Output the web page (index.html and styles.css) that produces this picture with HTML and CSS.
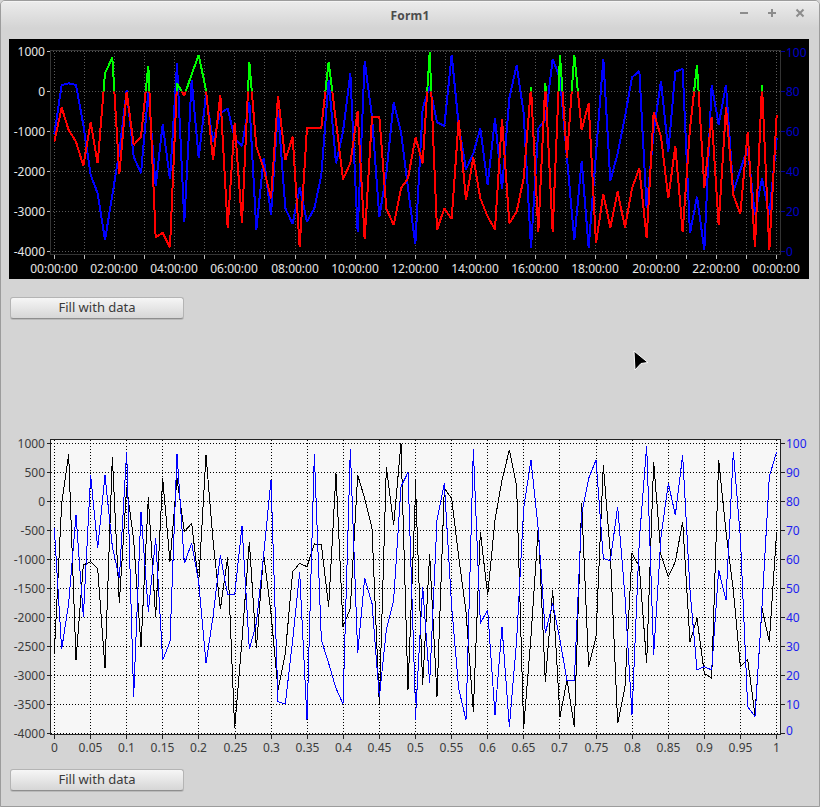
FILE: index.html
```html
<!DOCTYPE html>
<html lang="en">
<head>
<meta charset="utf-8">
<title>Form1</title>
<link rel="stylesheet" href="styles.css">
</head>
<body>
<div class="window">
  <header class="titlebar">
    <span class="title">Form1</span>
    <div class="controls">
      <svg class="ctl" viewBox="0 0 10 10"><path d="M1 5H9"/></svg>
      <svg class="ctl" viewBox="0 0 10 10"><path d="M1 5H9M5 1V9"/></svg>
      <svg class="ctl" viewBox="0 0 10 10"><path d="M1.5 1.5L8.5 8.5M8.5 1.5L1.5 8.5"/></svg>
    </div>
  </header>
  <main class="content">
    <svg class="chart chart-top" viewBox="9 39 800 240">
      <defs>
        <clipPath id="above"><rect x="9" y="39" width="800" height="52.5"/></clipPath>
        <clipPath id="below"><rect x="9" y="91.5" width="800" height="188"/></clipPath>
      </defs>
      <path class="grid" d="M50 51.500H781M50 91.500H781M50 131.500H781M50 171.500H781M50 211.500H781M50 251.500H781"/>
      <path class="grid" d="M54.500 50V254M84.500 50V254M114.500 50V254M144.500 50V254M174.500 50V254M204.500 50V254M234.500 50V254M264.500 50V254M295.500 50V254M325.500 50V254M355.500 50V254M385.500 50V254M415.500 50V254M445.500 50V254M475.500 50V254M505.500 50V254M535.500 50V254M565.500 50V254M595.500 50V254M626.500 50V254M656.500 50V254M686.500 50V254M716.500 50V254M746.500 50V254M776.500 50V254"/>
      <path class="frame" d="M50.500 50.500H780.500V254.500H50.500Z"/>
      <path class="tick-l" d="M47 51.500H50M47 91.500H50M47 131.500H50M47 171.500H50M47 211.500H50M47 251.500H50"/>
      <path class="tick-l" d="M54.500 255V259M84.500 255V259M114.500 255V259M144.500 255V259M174.500 255V259M204.500 255V259M234.500 255V259M264.500 255V259M295.500 255V259M325.500 255V259M355.500 255V259M385.500 255V259M415.500 255V259M445.500 255V259M475.500 255V259M505.500 255V259M535.500 255V259M565.500 255V259M595.500 255V259M626.500 255V259M656.500 255V259M686.500 255V259M716.500 255V259M746.500 255V259M776.500 255V259"/>
      <path class="tick-r" d="M781 51.500H785M781 91.500H785M781 131.500H785M781 171.500H785M781 211.500H785M781 251.500H785"/>
      <g transform="translate(50 45) scale(0.33333)">
        <polyline class="s2 blue" points="13,268 35,120 56,115 78,120 100,240 122,390 143,445 165,585 187,450 208,320 230,135 251,335 273,385 295,140 317,423 338,238 360,403 381,55 403,530 425,105 446,338 468,150 489,290 511,205 533,190 554,280 576,303 598,170 619,555 641,338 663,510 684,195 706,490 728,537 749,428 771,530 793,490 814,390 836,105 858,355 879,260 901,85 923,562 944,48 966,215 988,517 1009,385 1031,172 1053,262 1074,430 1096,598"/>
      </g>
      <g transform="translate(415 45) scale(0.33333)">
        <polyline class="s2 blue" points="1,598 23,190 44,125 66,232 88,243 110,30 131,240 153,373 175,325 196,250 218,420 240,220 261,432 283,160 305,60 326,205 348,610 370,250 391,225 413,42 435,100 456,340 478,585 500,348 521,610 543,325 565,42 586,408 608,325 630,215 651,97 673,78 695,490 716,260 738,108 760,320 781,80 803,72 825,565 846,455 868,615 890,120 911,238 933,120 955,440 976,375 998,310 1020,510 1041,400 1063,510 1085,280"/>
      </g>
      <g clip-path="url(#above)">
        <g transform="translate(50 45) scale(0.33333)">
          <polyline class="s2 green" points="13,290 35,188 56,255 78,290 100,363 122,232 143,355 165,85 187,38 208,388 230,140 251,300 273,275 295,62 317,577 338,563 360,607 381,115 403,152 425,88 446,30 468,135 489,345 511,150 533,548 554,235 576,533 598,50 619,305 641,370 663,460 684,152 706,345 728,275 749,607 771,248 793,248 814,248 836,50 858,230 879,403 901,355 923,198 944,583 966,215 988,215 1009,490 1031,540 1053,430 1074,400 1096,280"/>
        </g>
        <g transform="translate(415 45) scale(0.33333)">
          <polyline class="s2 green" points="1,275 23,355 44,22 66,555 88,490 110,522 131,225 153,465 175,338 196,460 218,515 240,553 261,222 283,535 305,500 326,400 348,125 370,560 391,113 413,562 435,30 456,338 478,30 500,255 521,175 543,595 565,447 586,547 608,440 630,548 651,430 673,370 695,580 716,202 738,275 760,460 781,303 803,562 825,250 846,60 868,428 890,215 911,540 933,187 955,450 976,507 998,262 1020,607 1041,120 1063,615 1085,210"/>
        </g>
      </g>
      <g clip-path="url(#below)">
        <g transform="translate(50 45) scale(0.33333)">
          <polyline class="s2 red" points="13,290 35,188 56,255 78,290 100,363 122,232 143,355 165,85 187,38 208,388 230,140 251,300 273,275 295,62 317,577 338,563 360,607 381,115 403,152 425,88 446,30 468,135 489,345 511,150 533,548 554,235 576,533 598,50 619,305 641,370 663,460 684,152 706,345 728,275 749,607 771,248 793,248 814,248 836,50 858,230 879,403 901,355 923,198 944,583 966,215 988,215 1009,490 1031,540 1053,430 1074,400 1096,280"/>
        </g>
        <g transform="translate(415 45) scale(0.33333)">
          <polyline class="s2 red" points="1,275 23,355 44,22 66,555 88,490 110,522 131,225 153,465 175,338 196,460 218,515 240,553 261,222 283,535 305,500 326,400 348,125 370,560 391,113 413,562 435,30 456,338 478,30 500,255 521,175 543,595 565,447 586,547 608,440 630,548 651,430 673,370 695,580 716,202 738,275 760,460 781,303 803,562 825,250 846,60 868,428 890,215 911,540 933,187 955,450 976,507 998,262 1020,607 1041,120 1063,615 1085,210"/>
        </g>
      </g>
      <g class="lbl lbl-end light">
        <text x="45" y="56">1000</text><text x="45" y="96">0</text><text x="45" y="136">-1000</text><text x="45" y="176">-2000</text><text x="45" y="216">-3000</text><text x="45" y="256">-4000</text>
      </g>
      <g class="lbl lbl-start deep">
        <text x="786" y="57">100</text><text x="786" y="96">80</text><text x="786" y="136">60</text><text x="786" y="176">40</text><text x="786" y="216">20</text><text x="786" y="256">0</text>
      </g>
      <g class="lbl lbl-mid light">
        <text x="54" y="272.500">00:00:00</text><text x="114" y="272.500">02:00:00</text><text x="174" y="272.500">04:00:00</text><text x="234" y="272.500">06:00:00</text><text x="295" y="272.500">08:00:00</text><text x="355" y="272.500">10:00:00</text><text x="415" y="272.500">12:00:00</text><text x="475" y="272.500">14:00:00</text><text x="535" y="272.500">16:00:00</text><text x="595" y="272.500">18:00:00</text><text x="656" y="272.500">20:00:00</text><text x="716" y="272.500">22:00:00</text><text x="776" y="272.500">00:00:00</text>
      </g>
    </svg>
    <button class="btn btn-top" type="button">Fill with data</button>
    <svg class="chart chart-bottom" viewBox="9 435 800 325">
      <rect class="plot" x="50" y="439" width="731" height="295"/>
      <path class="grid2" d="M51 443.500H780M51 472.500H780M51 501.500H780M51 530.500H780M51 559.500H780M51 588.500H780M51 617.500H780M51 646.500H780M51 675.500H780M51 704.500H780M51 733.500H780"/>
      <path class="grid2" d="M54.500 440V734M90.500 440V734M126.500 440V734M162.500 440V734M198.500 440V734M235.500 440V734M271.500 440V734M307.500 440V734M343.500 440V734M379.500 440V734M415.500 440V734M451.500 440V734M487.500 440V734M523.500 440V734M559.500 440V734M596.500 440V734M632.500 440V734M668.500 440V734M704.500 440V734M740.500 440V734M776.500 440V734"/>
      <g transform="translate(50 440) scale(0.33333)">
        <polyline class="s1 black" points="13,640 35,190 56,43 78,660 100,375 122,365 143,385 165,685 187,50 208,490 230,140 251,300 273,620 295,172 317,532 338,115 360,365 381,115 403,275 425,250 446,430 468,45 489,300 511,508 533,352 554,865 576,600 598,305 619,625 641,342 663,520 684,750 706,640 728,395 749,370 771,380 793,312 814,313 836,500 858,100 879,560 901,505 923,105 944,175 966,265 988,795 1009,80 1031,255 1053,10 1074,750 1096,170"/>
      </g>
      <g transform="translate(415 440) scale(0.33333)">
        <polyline class="s1 black" points="1,120 23,735 44,343 66,770 88,145 110,175 131,350 153,515 175,815 196,275 218,465 240,240 261,120 283,30 305,140 326,865 348,590 370,260 391,725 413,450 435,830 456,720 478,860 500,190 521,680 543,590 565,75 586,340 608,850 630,740 651,340 673,380 695,670 716,65 738,345 760,410 781,365 803,245 825,605 846,535 868,700 890,715 911,60 933,275 955,450 976,680 998,658 1020,825 1041,505 1063,605 1085,275"/>
      </g>
      <g transform="translate(50 440) scale(0.33333)">
        <polyline class="s1 blue" points="13,265 35,628 56,490 78,225 100,530 122,105 143,325 165,105 187,320 208,415 230,35 251,770 273,215 295,515 317,295 338,660 360,605 381,42 403,370 425,310 446,425 468,670 489,530 511,345 533,465 554,465 576,258 598,628 619,550 641,345 663,120 684,785 706,792 728,600 749,397 771,840 793,42 814,600 836,670 858,745 879,792 901,28 923,640 944,415 966,490 988,772 1009,570 1031,480 1053,140 1074,97 1096,790"/>
      </g>
      <g transform="translate(415 440) scale(0.33333)">
        <polyline class="s1 blue" points="1,840 23,440 44,730 66,240 88,130 110,500 131,745 153,840 175,28 196,550 218,510 240,825 261,560 283,860 305,600 326,205 348,60 370,270 391,580 413,490 435,600 456,722 478,722 500,220 521,115 543,60 565,355 586,362 608,200 630,470 651,825 673,300 695,18 716,645 738,290 760,130 781,225 803,45 825,450 846,690 868,680 890,690 911,390 933,480 955,35 976,290 998,800 1020,830 1041,500 1063,110 1085,35"/>
      </g>
      <path class="frame2" d="M50.500 439.500H780.500V734.500H50.500Z"/>
      <path class="tick2" d="M47 443.500H50M47 472.500H50M47 501.500H50M47 530.500H50M47 559.500H50M47 588.500H50M47 617.500H50M47 646.500H50M47 675.500H50M47 704.500H50M47 733.500H50"/>
      <path class="tick2" d="M54.500 735V739M90.500 735V739M126.500 735V739M162.500 735V739M198.500 735V739M235.500 735V739M271.500 735V739M307.500 735V739M343.500 735V739M379.500 735V739M415.500 735V739M451.500 735V739M487.500 735V739M523.500 735V739M559.500 735V739M596.500 735V739M632.500 735V739M668.500 735V739M704.500 735V739M740.500 735V739M776.500 735V739"/>
      <path class="tick2" d="M781 443.500H785M781 472.500H785M781 501.500H785M781 530.500H785M781 559.500H785M781 588.500H785M781 617.500H785M781 646.500H785M781 675.500H785M781 704.500H785M781 733.500H785"/>
      <g class="lbl lbl-end ink">
        <text x="45" y="448">1000</text><text x="45" y="477">500</text><text x="45" y="506">0</text><text x="45" y="535">-500</text><text x="45" y="564">-1000</text><text x="45" y="593">-1500</text><text x="45" y="622">-2000</text><text x="45" y="651">-2500</text><text x="45" y="680">-3000</text><text x="45" y="709">-3500</text><text x="45" y="738">-4000</text>
      </g>
      <g class="lbl lbl-start bright">
        <text x="786" y="448">100</text><text x="786" y="477">90</text><text x="786" y="506">80</text><text x="786" y="535">70</text><text x="786" y="564">60</text><text x="786" y="593">50</text><text x="786" y="622">40</text><text x="786" y="651">30</text><text x="786" y="680">20</text><text x="786" y="709">10</text><text x="786" y="735">0</text>
      </g>
      <g class="lbl lbl-mid ink">
        <text x="54.500" y="752">0</text><text x="90.500" y="752">0.05</text><text x="126.500" y="752">0.1</text><text x="162.500" y="752">0.15</text><text x="198.500" y="752">0.2</text><text x="235.500" y="752">0.25</text><text x="271.500" y="752">0.3</text><text x="307.500" y="752">0.35</text><text x="343.500" y="752">0.4</text><text x="379.500" y="752">0.45</text><text x="415.500" y="752">0.5</text><text x="451.500" y="752">0.55</text><text x="487.500" y="752">0.6</text><text x="523.500" y="752">0.65</text><text x="559.500" y="752">0.7</text><text x="596.500" y="752">0.75</text><text x="632.500" y="752">0.8</text><text x="668.500" y="752">0.85</text><text x="704.500" y="752">0.9</text><text x="740.500" y="752">0.95</text><text x="776.500" y="752">1</text>
      </g>
    </svg>
    <button class="btn btn-bottom" type="button">Fill with data</button>
  </main>
  <svg class="cursor" viewBox="0 0 18 22"><path d="M2 2L16 13.500L9 14.500L3 21Z"/></svg>
</div>
</body>
</html>
```

FILE: styles.css
```css
* { box-sizing: border-box; }
html, body { margin: 0; padding: 0; }
body { width: 820px; height: 807px; overflow: hidden; background: #d4d4d4; font-family: "Noto Sans", "Open Sans", sans-serif; }
.window {
  position: relative;
  width: 820px;
  height: 807px;
  background: #d4d4d4;
  border: 1px solid #9c9c9c;
  border-radius: 5px 5px 0 0;
  overflow: hidden;
}
.titlebar {
  position: relative;
  height: 27px;
  display: flex;
  align-items: center;
  justify-content: center;
  background: linear-gradient(#ebebeb, #d4d4d4);
  border-top: 1px solid #f4f4f4;
}
.title { font-size: 12px; font-weight: 700; color: #4c4c4c; letter-spacing: 0.2px; }
.controls {
  position: absolute;
  top: 6px;
  right: 14px;
  display: flex;
  gap: 18px;
}
.ctl { width: 10px; height: 10px; display: block; }
.ctl path { fill: none; stroke: #8c8c8c; stroke-width: 2; }
.content { display: flex; flex-direction: column; align-items: flex-start; padding: 11px 0 0 8px; }
.chart { display: block; width: 800px; }
.chart-top { height: 240px; background: #000; }
.chart-bottom { height: 325px; margin-top: 116px; }
.btn {
  display: block;
  width: 174px;
  height: 22px;
  margin-left: 1px;
  padding: 0 0 2px;
  border: 1px solid #b4b4b4;
  border-bottom-color: #8e8e8e;
  border-radius: 3px;
  background: linear-gradient(#f6f6f6, #d6d6d6);
  box-shadow: 0 1px 0 rgba(0, 0, 0, 0.12);
  color: #3a3a3a;
  font-family: "Noto Sans", "Open Sans", sans-serif;
  font-size: 13px;
  line-height: 18px;
}
.btn-top { margin-top: 18px; }
.btn-bottom { margin-top: 9px; }
.grid { fill: none; stroke: #5a5a5a; stroke-width: 1; stroke-dasharray: 1 2; shape-rendering: crispEdges; }
.frame { fill: none; stroke: #333; stroke-width: 1; shape-rendering: crispEdges; }
.tick-l { fill: none; stroke: #bbb; stroke-width: 1; shape-rendering: crispEdges; }
.tick-r { fill: none; stroke: #0000a0; stroke-width: 1; shape-rendering: crispEdges; }
.plot { fill: #f7f7f7; }
.grid2 { fill: none; stroke: #000; stroke-width: 1; stroke-dasharray: 1 2; shape-rendering: crispEdges; }
.frame2 { fill: none; stroke: #222; stroke-width: 1; shape-rendering: crispEdges; }
.tick2 { fill: none; stroke: #222; stroke-width: 1; shape-rendering: crispEdges; }
polyline { fill: none; vector-effect: non-scaling-stroke; shape-rendering: crispEdges; stroke-linejoin: bevel; }
.s2 { stroke-width: 2; }
.s1 { stroke-width: 1; }
.blue { stroke: #0000ff; }
.red { stroke: #ff0000; }
.green { stroke: #00ff00; }
.black { stroke: #000; }
.lbl { font-family: "Noto Sans", "Open Sans", sans-serif; font-size: 12px; }
.lbl-end { text-anchor: end; }
.lbl-start { text-anchor: start; }
.lbl-mid { text-anchor: middle; }
.light { fill: #e6e6e6; }
.deep { fill: #0000c8; }
.ink { fill: #3c3c3c; }
.bright { fill: #1c1cf0; }
.cursor { position: absolute; left: 631px; top: 348px; width: 18px; height: 22px; }
.cursor path { fill: #000; stroke: #fff; stroke-width: 1; stroke-linejoin: round; }
```
